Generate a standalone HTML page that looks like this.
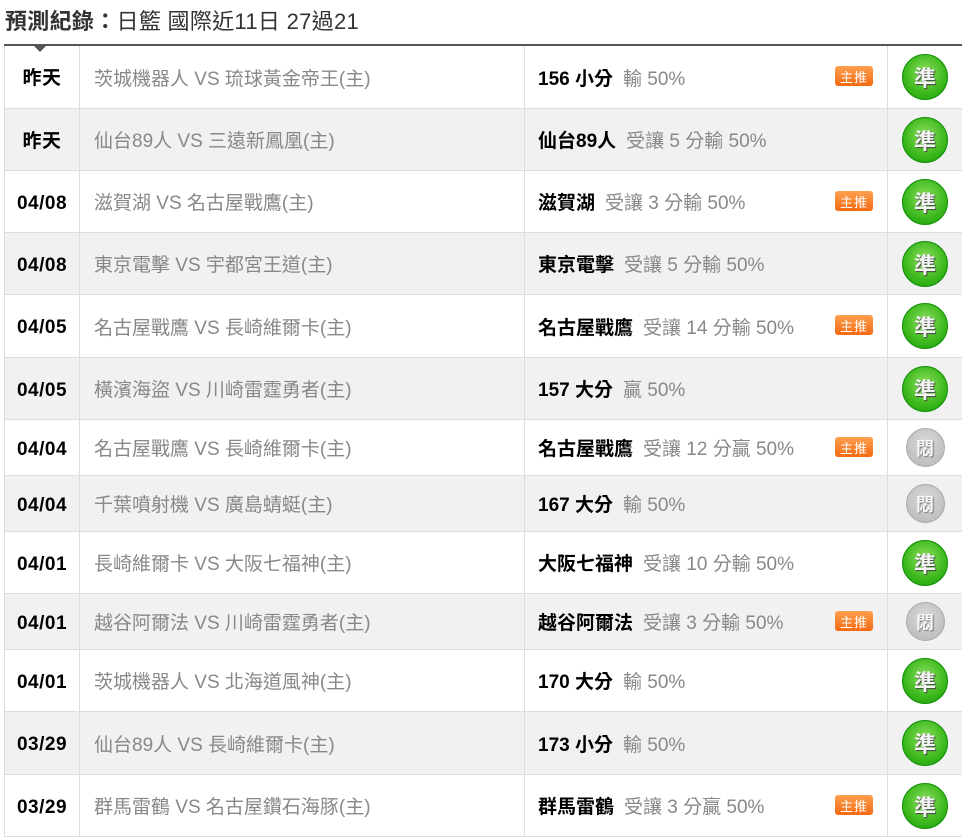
<!DOCTYPE html>
<html><head><meta charset="utf-8"><style>
body{margin:0;width:962px;height:834px;overflow:hidden;background:#fff;font-family:"Liberation Sans","Noto Sans CJK TC",sans-serif;position:relative}
.title{position:absolute;left:5px;top:4px;font-size:22px;color:#333;white-space:nowrap;letter-spacing:0.3px}
.title b{font-weight:bold}
.topline{position:absolute;left:4px;right:0;top:44px;height:2px;background:#555}
.arrow{position:absolute;left:34px;top:46px;width:0;height:0;border-left:6px solid transparent;border-right:6px solid transparent;border-top:6px solid #555}
.row{position:absolute;left:4px;width:958px;border-bottom:1px solid #ddd;box-sizing:border-box}
.row.g{background:#f1f1f1}
.c{position:absolute;top:0;bottom:0;display:flex;align-items:center;white-space:nowrap}
.d{left:0;width:75px;justify-content:center;font-weight:bold;font-size:19px;color:#000;border-left:1px solid #ddd;box-sizing:border-box;letter-spacing:0.5px;line-height:20px;padding-top:4px}
.m{left:75px;width:445px;padding-left:14px;font-size:19px;color:#888;border-left:1px solid #ddd;box-sizing:border-box}
.p{left:520px;width:363px;padding-left:13px;font-size:19px;color:#888;border-left:1px solid #ddd;box-sizing:border-box}
.p b{color:#000;margin-right:10px}
.r{left:883px;width:75px;justify-content:center;border-left:1px solid #ddd;box-sizing:border-box}
.badge{position:absolute;left:831px;width:38px;height:20px;border-radius:3px;background:linear-gradient(#ffa050,#f26a10);color:#fff;font-size:13px;display:flex;align-items:center;justify-content:center;letter-spacing:1px}
.ok{width:44px;height:44px;border-radius:50%;border:1px solid #119008;background:radial-gradient(circle at 50% 40%,#8ee060,#3cb81c 60%,#159a0a);display:flex;align-items:center;justify-content:center;color:#f4f4f4;font-size:22px;font-weight:bold;text-shadow:1px 1px 1px #444}
.no{width:37px;height:37px;border-radius:50%;border:1px solid #aaa;background:radial-gradient(circle at 50% 40%,#dcdcdc,#c0c0c0 70%,#b0b0b0);display:flex;align-items:center;justify-content:center;color:#fafafa;font-size:18px;font-weight:bold;text-shadow:1px 1px 1px #777}
</style></head><body>
<div class="title"><b>預測紀錄：</b>日籃 國際近11日 27過21</div>
<div class="topline"></div>
<div class="arrow"></div>

<div class="row" style="top:46px;height:63px"><div class="c d">昨天</div><div class="c m">茨城機器人 VS 琉球黃金帝王(主)</div><div class="c p"><b>156 小分</b>輸 50%</div><div class="badge" style="top:20px">主推</div><div class="c r"><div class="ok">準</div></div></div>
<div class="row g" style="top:109px;height:62px"><div class="c d">昨天</div><div class="c m">仙台89人 VS 三遠新鳳凰(主)</div><div class="c p"><b>仙台89人</b>受讓 5 分輸 50%</div><div class="c r"><div class="ok">準</div></div></div>
<div class="row" style="top:171px;height:62px"><div class="c d">04/08</div><div class="c m">滋賀湖 VS 名古屋戰鷹(主)</div><div class="c p"><b>滋賀湖</b>受讓 3 分輸 50%</div><div class="badge" style="top:20px">主推</div><div class="c r"><div class="ok">準</div></div></div>
<div class="row g" style="top:233px;height:62px"><div class="c d">04/08</div><div class="c m">東京電擊 VS 宇都宮王道(主)</div><div class="c p"><b>東京電擊</b>受讓 5 分輸 50%</div><div class="c r"><div class="ok">準</div></div></div>
<div class="row" style="top:295px;height:63px"><div class="c d">04/05</div><div class="c m">名古屋戰鷹 VS 長崎維爾卡(主)</div><div class="c p"><b>名古屋戰鷹</b>受讓 14 分輸 50%</div><div class="badge" style="top:20px">主推</div><div class="c r"><div class="ok">準</div></div></div>
<div class="row g" style="top:358px;height:62px"><div class="c d">04/05</div><div class="c m">橫濱海盜 VS 川崎雷霆勇者(主)</div><div class="c p"><b>157 大分</b>贏 50%</div><div class="c r"><div class="ok">準</div></div></div>
<div class="row" style="top:420px;height:56px"><div class="c d">04/04</div><div class="c m">名古屋戰鷹 VS 長崎維爾卡(主)</div><div class="c p"><b>名古屋戰鷹</b>受讓 12 分贏 50%</div><div class="badge" style="top:17px">主推</div><div class="c r"><div class="no">悶</div></div></div>
<div class="row g" style="top:476px;height:56px"><div class="c d">04/04</div><div class="c m">千葉噴射機 VS 廣島蜻蜓(主)</div><div class="c p"><b>167 大分</b>輸 50%</div><div class="c r"><div class="no">悶</div></div></div>
<div class="row" style="top:532px;height:62px"><div class="c d">04/01</div><div class="c m">長崎維爾卡 VS 大阪七福神(主)</div><div class="c p"><b>大阪七福神</b>受讓 10 分輸 50%</div><div class="c r"><div class="ok">準</div></div></div>
<div class="row g" style="top:594px;height:56px"><div class="c d">04/01</div><div class="c m">越谷阿爾法 VS 川崎雷霆勇者(主)</div><div class="c p"><b>越谷阿爾法</b>受讓 3 分輸 50%</div><div class="badge" style="top:17px">主推</div><div class="c r"><div class="no">悶</div></div></div>
<div class="row" style="top:650px;height:62px"><div class="c d">04/01</div><div class="c m">茨城機器人 VS 北海道風神(主)</div><div class="c p"><b>170 大分</b>輸 50%</div><div class="c r"><div class="ok">準</div></div></div>
<div class="row g" style="top:712px;height:63px"><div class="c d">03/29</div><div class="c m">仙台89人 VS 長崎維爾卡(主)</div><div class="c p"><b>173 小分</b>輸 50%</div><div class="c r"><div class="ok">準</div></div></div>
<div class="row" style="top:775px;height:62px"><div class="c d">03/29</div><div class="c m">群馬雷鶴 VS 名古屋鑽石海豚(主)</div><div class="c p"><b>群馬雷鶴</b>受讓 3 分贏 50%</div><div class="badge" style="top:20px">主推</div><div class="c r"><div class="ok">準</div></div></div>
</body></html>
